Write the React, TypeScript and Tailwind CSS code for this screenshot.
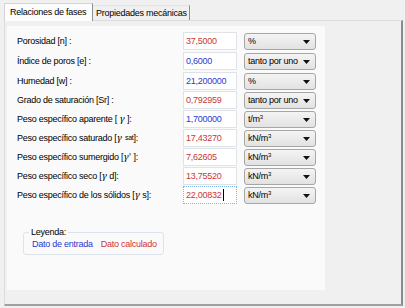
import React from "react";

const Tri = () => (
  <svg width="7" height="4" viewBox="0 0 7 4" className="block">
    <path d="M0 0H7L3.5 4Z" fill="#111" />
  </svg>
);

type Row = { label: React.ReactNode; value: string; color: "r" | "b"; unit: React.ReactNode; focus?: boolean };

const G = ({ children }: { children?: React.ReactNode }) => (
  <span style={{ fontFamily: "'DejaVu Serif', serif" }} className="italic text-[9px] tracking-normal">
    γ{children}
  </span>
);

const m3 = (
  <span>
    m<span className="text-[6px] align-top relative -top-[1px]">3</span>
  </span>
);

const rows: Row[] = [
  { label: "Porosidad [n] :", value: "37,5000", color: "r", unit: "%" },
  { label: "Índice de poros [e] :", value: "0,6000", color: "b", unit: "tanto por uno" },
  { label: "Humedad [w] :", value: "21,200000", color: "b", unit: "%" },
  { label: "Grado de saturación [Sr] :", value: "0,792959", color: "r", unit: "tanto por uno" },
  {
    label: <>{"Peso específico aparente [ "}<G />{" ]:"}</>,
    value: "1,700000",
    color: "b",
    unit: <>t/{m3}</>,
  },
  {
    label: (
      <>
        {"Peso específico saturado ["}
        <G />
        <span className="ml-[3px] text-[7px] align-top relative -top-[1px]">sat</span>
        {"]:"}
      </>
    ),
    value: "17,43270",
    color: "r",
    unit: <>kN/{m3}</>,
  },
  {
    label: <>{"Peso específico sumergido ["}<G>'</G>{" ]:"}</>,
    value: "7,62605",
    color: "r",
    unit: <>kN/{m3}</>,
  },
  {
    label: <>{"Peso específico seco ["}<G />{" d]:"}</>,
    value: "13,75520",
    color: "r",
    unit: <>kN/{m3}</>,
  },
  {
    label: <>{"Peso específico de los sólidos ["}<G />{" s]:"}</>,
    value: "22,00832",
    color: "r",
    unit: <>kN/{m3}</>,
    focus: true,
  },
];

export default function App() {
  return (
    <div
      className="w-[405px] h-[308px] bg-[#f0f0f0] overflow-hidden text-[9px] tracking-[-0.25px] text-black leading-none"
      style={{ fontFamily: "'Liberation Sans', Arial, sans-serif" }}
    >
      {/* tabs */}
      <div className="flex items-end h-[20px] pl-[4px] pt-[2px]">
        <div className="relative z-10 h-[18px] -mb-px w-[89px] bg-[#fcfcfc] border-l border-t border-r border-[#d4d4d4] border-r-[#8e8f8f] flex items-center pl-[5px] pb-[1px]">
          Relaciones de fases
        </div>
        <div className="h-[15px] w-[97px] border-r border-[#8e8f8f] border-t border-t-[#e3e3e3] flex items-center pl-[3px]">
          Propiedades mecánicas
        </div>
      </div>
      {/* tab page */}
      <div className="ml-[4px] w-[399px] h-[286px] border-l border-t border-[#dcdcdc] border-r-2 border-r-[#8c8c8c] border-b-2 border-b-[#a0a0a0] flex pt-[5px] pl-[2px]">
        <div className="w-[318px] h-[264px] bg-[#fafafa] pl-[10px] pt-[6px]">
          <div className="flex flex-col">
            {rows.map((r, i) => (
              <div key={i} className={`flex items-start ${i < 2 ? "h-[20px]" : "h-[19px]"}`}>
                <div className="w-[166px] h-[18px] flex items-center whitespace-pre">{r.label}</div>
                <div
                  className={`w-[54px] h-[18px] bg-white flex items-center pl-[2px] ${
                    r.focus ? "border border-dotted border-[#7eb4ea]" : "border border-[#dfe3e8]"
                  } ${r.color === "r" ? "text-[#cc3636]" : "text-[#2a3ad0]"}`}
                >
                  {r.value}
                  {r.focus && <span className="inline-block w-px h-[12px] bg-black ml-px" />}
                </div>
                <div className="ml-[7px] mt-px w-[72px] h-[17px] rounded-[3px] border border-[#a6a6a6] bg-gradient-to-b from-[#f4f4f4] to-[#e2e2e2] flex items-center justify-between pl-[3px] pr-[5px]">
                  <span>{r.unit}</span>
                  <Tri />
                </div>
              </div>
            ))}
          </div>
          {/* legend */}
          <div className="ml-[6px] mt-[27px] w-[141px] h-[23px] relative border border-[#dde3ea] rounded-[3px] flex items-end pl-[8px] pb-[5px]">
            <div className="absolute -top-[5px] left-[5px] bg-[#fafafa] px-[2px] leading-none">Leyenda:</div>
            <span className="text-[#2a3ad0]">Dato de entrada</span>
            <span className="text-[#cc3636] ml-[8px]">Dato calculado</span>
          </div>
        </div>
      </div>
    </div>
  );
}
